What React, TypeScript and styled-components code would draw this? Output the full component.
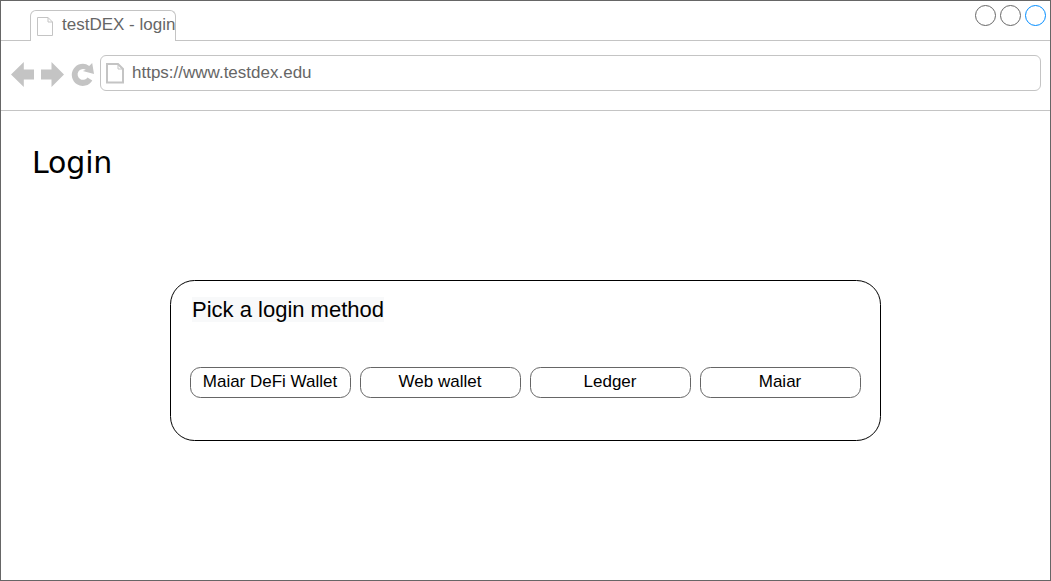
import React from "react";
import styled, { createGlobalStyle } from "styled-components";

const GlobalStyle = createGlobalStyle`
  * { box-sizing: border-box; }
  body { margin: 0; background: #fff; }
`;

const Window = styled.div`
  width: 1051px;
  height: 581px;
  border: 1px solid #666;
  background: #fff;
  display: flex;
  flex-direction: column;
  overflow: hidden;
  font-family: "Liberation Sans", Arial, sans-serif;
`;

const TabBar = styled.header`
  height: 40px;
  flex: none;
  display: flex;
  align-items: flex-end;
`;

const Rule = styled.div<{ $width?: number }>`
  height: 40px;
  border-bottom: 1px solid #c4c4c4;
  ${(p) => (p.$width ? `width: ${p.$width}px;` : "flex: 1;")}
`;

const WindowControls = styled(Rule)`
  display: flex;
  justify-content: flex-end;
  align-items: flex-start;
  gap: 4px;
  padding: 4px 4px 0 0;
`;

const Control = styled.svg<{ $color: string }>`
  width: 21px;
  height: 21px;
  fill: none;
  stroke: ${(p) => p.$color};
`;

const Tab = styled.div`
  width: 146px;
  height: 31px;
  border: 1px solid #c4c4c4;
  border-bottom: 0;
  border-radius: 6px 6px 0 0;
  display: flex;
  align-items: flex-start;
  padding: 5px 0 0 5px;
  color: #666;
  font-size: 17px;
  line-height: 19px;
  white-space: nowrap;
`;

const TabTitle = styled.span`
  margin-left: 6px;
  margin-top: -1px;
`;

const Toolbar = styled.nav`
  height: 70px;
  flex: none;
  border-bottom: 1px solid #c4c4c4;
  display: flex;
  align-items: flex-start;
  padding: 14px 9px 0 9px;
`;

const NavIcons = styled.svg`
  width: 90px;
  height: 36px;
  flex: none;
  fill: #c4c4c4;
`;

const AddressBar = styled.div`
  flex: 1;
  height: 36px;
  border: 1px solid #c4c4c4;
  border-radius: 6px;
  display: flex;
  align-items: flex-start;
  padding: 7px 0 0 4px;
  color: #666;
  font-size: 17px;
  line-height: 19px;
`;

const Url = styled.span`
  margin-left: 7px;
`;

const PageIcon = styled.svg`
  width: 20px;
  height: 22px;
  flex: none;
  fill: none;
  stroke: #c4c4c4;
`;

const Content = styled.main`
  flex: 1;
  padding: 34px 169px 0;
`;

const Title = styled.h1`
  margin: 0 0 0 -138px;
  height: 135px;
  font: 400 30px/36px "DejaVu Sans", Verdana, sans-serif;
  letter-spacing: -0.15px;
  color: #000;
`;

const Card = styled.section`
  width: 711px;
  height: 161px;
  border: 1px solid #000;
  border-radius: 24.5px;
  padding: 16px 19px 0;
`;

const Prompt = styled.h2`
  width: max-content;
  margin: 0 0 45px 2px;
  background: #f8f9fa;
  color: #000;
  font-size: 22px;
  font-weight: 400;
  line-height: 25px;
`;

const Methods = styled.div`
  display: flex;
  gap: 9px;
`;

const Method = styled.button`
  width: 161px;
  height: 31px;
  padding: 0 1px 2px 0;
  border: 1px solid #666;
  border-radius: 10.5px;
  background: #fff;
  color: #000;
  font: 17px/19px "Liberation Sans", Arial, sans-serif;
`;

const methods = ["Maiar DeFi Wallet", "Web wallet", "Ledger", "Maiar"];
const controls = ["#666", "#666", "#008cff"];

export default function App() {
  return (
    <>
      <GlobalStyle />
      <Window>
        <TabBar>
          <Rule $width={29} />
          <Tab>
            <PageIcon viewBox="0 0 20 22">
              <path d="M1.5 1.5h10.5l4.5 4.5v13.5h-15zM12 1.5v4.5h4.5" />
            </PageIcon>
            <TabTitle>testDEX - login</TabTitle>
          </Tab>
          <WindowControls>
            {controls.map((color, i) => (
              <Control key={i} $color={color} viewBox="0 0 21 21">
                <circle cx="10.5" cy="10.5" r="10" />
              </Control>
            ))}
          </WindowControls>
        </TabBar>
        <Toolbar>
          <NavIcons viewBox="0 0 90 36">
            <path d="M1 19.5L13.8 7v7.5H24v10H13.8V32z" />
            <path d="M54 19.5L41.5 7v7.5H31v10h10.5V32z" />
            <path d="M82.2 8L84 19L72.8 16L75.8 14.8A5.4 5.4 0 1 0 77.5 22.4L82.3 25.4A11 11 0 1 1 79.2 10.9z" />
          </NavIcons>
          <AddressBar>
            <PageIcon viewBox="0 0 20 22">
              <path strokeWidth="2" d="M2 1h11l5 5v13.5h-16z" />
              <path d="M13 1v5h5" />
            </PageIcon>
            <Url>https://www.testdex.edu</Url>
          </AddressBar>
        </Toolbar>
        <Content>
          <Title>Login</Title>
          <Card>
            <Prompt>Pick a login method</Prompt>
            <Methods>
              {methods.map((name) => (
                <Method key={name}>{name}</Method>
              ))}
            </Methods>
          </Card>
        </Content>
      </Window>
    </>
  );
}
